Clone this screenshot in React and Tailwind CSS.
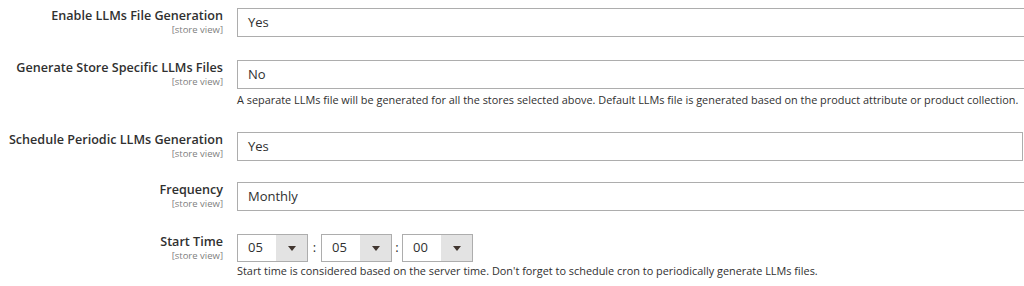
const font = { fontFamily: "'Open Sans', 'Liberation Sans', sans-serif" };

function Label({ title }) {
  return (
    <div className="flex flex-col items-end text-right">
      <span className="text-[12.6px] leading-[16px] font-semibold text-[#303030]">{title}</span>
      <span className="text-[9.5px] leading-[11px] text-[#808080]">[store view]</span>
    </div>
  );
}

function Select({ value, width = "w-[820px]" }) {
  return (
    <div className={`h-[29px] ${width} border border-[#adadad] bg-white flex items-center px-[10px] text-[13px] text-[#303030]`}>
      {value}
    </div>
  );
}

function TimeSelect({ value }) {
  return (
    <div className="flex h-[28px] w-[71px] border border-[#adadad] bg-white">
      <div className="flex-1 flex items-center pl-[10px] text-[13px] text-[#303030]">{value}</div>
      <div className="w-[31px] bg-[#e3e3e3] flex items-center justify-center">
        <svg width="8" height="5" viewBox="0 0 8 5">
          <path d="M0 0h8L4 5z" fill="#41362f" />
        </svg>
      </div>
    </div>
  );
}

function Row({ title, children, className }) {
  return (
    <div className={`grid grid-cols-[223px_1fr] gap-x-[14px] ${className}`}>
      <Label title={title} />
      <div className="min-w-0">{children}</div>
    </div>
  );
}

function Note({ children, className }) {
  return (
    <p className={`text-[10.9px] leading-[14px] text-[#303030] whitespace-nowrap ${className}`}>{children}</p>
  );
}

export default function App() {
  return (
    <div className="w-[1024px] h-[286px] bg-white overflow-hidden pt-[8px]" style={font}>
      <Row title="Enable LLMs File Generation">
        <Select value="Yes" />
      </Row>

      <Row title="Generate Store Specific LLMs Files" className="mt-[23px]">
        <Select value="No" />
        <Note className="mt-[4px]">
          A separate LLMs file will be generated for all the stores selected above. Default LLMs file is generated based on the product attribute or product collection.
        </Note>
      </Row>

      <Row title="Schedule Periodic LLMs Generation" className="mt-[25px]">
        <Select value="Yes" width="w-[786px]" />
      </Row>

      <Row title="Frequency" className="mt-[21px]">
        <Select value="Monthly" />
      </Row>

      <Row title="Start Time" className="mt-[23px]">
        <div className="flex items-center">
          <TimeSelect value="05" />
          <span className="w-[13px] text-center text-[13px] text-[#303030]">:</span>
          <TimeSelect value="05" />
          <span className="w-[10px] text-center text-[13px] text-[#303030]">:</span>
          <TimeSelect value="00" />
        </div>
        <Note className="mt-[2px]">
          Start time is considered based on the server time. Don't forget to schedule cron to periodically generate LLMs files.
        </Note>
      </Row>
    </div>
  );
}
